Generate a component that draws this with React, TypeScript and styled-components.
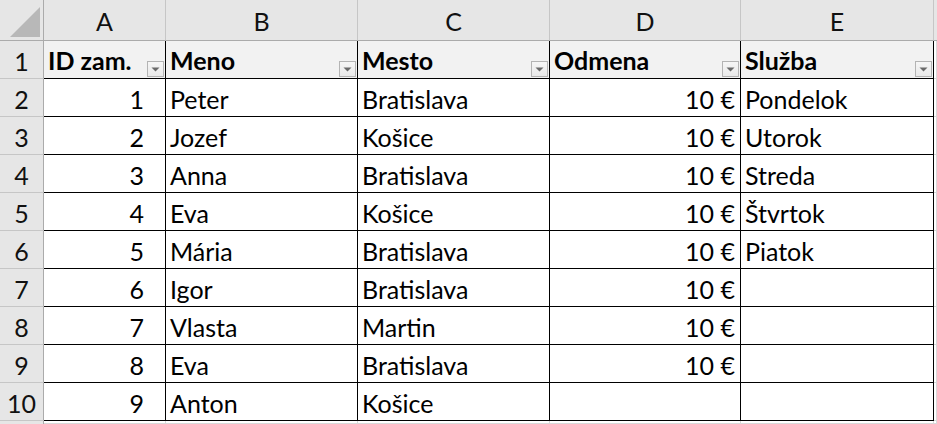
import React from "react";
import styled, { createGlobalStyle } from "styled-components";

const Global = createGlobalStyle`
  html, body { margin: 0; padding: 0; background: #ffffff; }
  body { font-family: Lato, "Open Sans", sans-serif; overflow: hidden; }
`;

const COLS = "44px 122px 192px 192px 191px 193px 1fr";
const ROWS = "41px repeat(10, 38px) 1fr";

const Sheet = styled.div`
  display: grid;
  grid-template-columns: ${COLS};
  grid-template-rows: ${ROWS};
  width: 937px;
  height: 424px;
  font-size: 25px;
  color: #000;
`;

const Corner = styled.div`
  background: #e6e6e6;
  border-right: 1px solid #ababab;
  border-bottom: 1px solid #ababab;
  box-sizing: border-box;
  display: flex;
  align-items: flex-end;
  justify-content: flex-end;
  padding: 0 3px 3px 0;
`;

const ColHead = styled.div`
  background: #e6e6e6;
  border-right: 1px solid #c6c6c6;
  border-bottom: 1px solid #ababab;
  box-sizing: border-box;
  display: flex;
  align-items: center;
  justify-content: center;
  color: #111;
  padding-top: 2px;
`;

const RowHead = styled.div`
  background: #e6e6e6;
  border-right: 1px solid #ababab;
  border-bottom: 1px solid #c6c6c6;
  box-sizing: border-box;
  display: flex;
  align-items: center;
  justify-content: center;
  color: #111;
  padding-top: 2px;
`;

const Cell = styled.div<{ $align?: "left" | "right"; $bold?: boolean; $head?: boolean; $padRight?: number }>`
  box-sizing: border-box;
  border-right: 1px solid #000;
  border-bottom: 1px solid #000;
  background: ${(p) => (p.$head ? "#f2f2f2" : "#ffffff")};
  display: flex;
  align-items: center;
  justify-content: ${(p) => (p.$align === "right" ? "flex-end" : "flex-start")};
  padding: 2px ${(p) => p.$padRight ?? 5}px 0 4px;
  font-weight: ${(p) => (p.$bold ? 700 : 400)};
  white-space: nowrap;
  overflow: hidden;
`;

const HeadCell = styled(Cell)`
  justify-content: space-between;
  align-items: stretch;
  padding: 0 1px 1px 4px;
`;

const HeadLabel = styled.span`
  display: flex;
  align-items: center;
  padding-top: 1px;
`;

const FilterBtn = styled.span`
  align-self: flex-end;
  width: 17px;
  height: 16px;
  box-sizing: border-box;
  border: 1px solid #b4b4b4;
  background: linear-gradient(#f6f6f6, #e9e9e9);
  display: flex;
  align-items: center;
  justify-content: center;
`;

const Blank = styled.div`
  box-sizing: border-box;
  border-right: 1px solid #d9d9d9;
  border-bottom: 1px solid #d9d9d9;
  background: #fff;
`;

const BlankHead = styled.div`
  background: #e6e6e6;
  border-bottom: 1px solid #ababab;
  box-sizing: border-box;
`;

const BlankRowHead = styled.div`
  background: #e6e6e6;
  border-right: 1px solid #ababab;
  box-sizing: border-box;
`;

const Filter = () => (
  <FilterBtn>
    <svg width="9" height="5" viewBox="0 0 9 5">
      <polygon points="0.5,0.5 8.5,0.5 4.5,4.5" fill="#6a6a6a" />
    </svg>
  </FilterBtn>
);

const headers = ["ID zam.", "Meno", "Mesto", "Odmena", "Služba"];
const letters = ["A", "B", "C", "D", "E"];

type Row = [string, string, string, string, string];
const data: Row[] = [
  ["1", "Peter", "Bratislava", "10 €", "Pondelok"],
  ["2", "Jozef", "Košice", "10 €", "Utorok"],
  ["3", "Anna", "Bratislava", "10 €", "Streda"],
  ["4", "Eva", "Košice", "10 €", "Štvrtok"],
  ["5", "Mária", "Bratislava", "10 €", "Piatok"],
  ["6", "Igor", "Bratislava", "10 €", ""],
  ["7", "Vlasta", "Martin", "10 €", ""],
  ["8", "Eva", "Bratislava", "10 €", ""],
  ["9", "Anton", "Košice", "", ""],
];

export default function App() {
  return (
    <>
      <Global />
      <Sheet>
        <Corner>
          <svg width="30" height="30" viewBox="0 0 30 30">
            <polygon points="30,0 30,30 0,30" fill="#b8b8b8" />
          </svg>
        </Corner>
        {letters.map((l) => (
          <ColHead key={l}>{l}</ColHead>
        ))}
        <BlankHead />

        <RowHead>1</RowHead>
        {headers.map((h) => (
          <HeadCell key={h} $head $bold>
            <HeadLabel>{h}</HeadLabel>
            <Filter />
          </HeadCell>
        ))}
        <Blank />

        {data.map((r, i) => (
          <React.Fragment key={i}>
            <RowHead>{i + 2}</RowHead>
            <Cell $align="right" $padRight={21}>{r[0]}</Cell>
            <Cell>{r[1]}</Cell>
            <Cell>{r[2]}</Cell>
            <Cell $align="right">{r[3]}</Cell>
            <Cell>{r[4]}</Cell>
            <Blank />
          </React.Fragment>
        ))}

        <BlankRowHead />
        {letters.map((l) => (
          <Blank key={l} />
        ))}
        <Blank />
      </Sheet>
    </>
  );
}
